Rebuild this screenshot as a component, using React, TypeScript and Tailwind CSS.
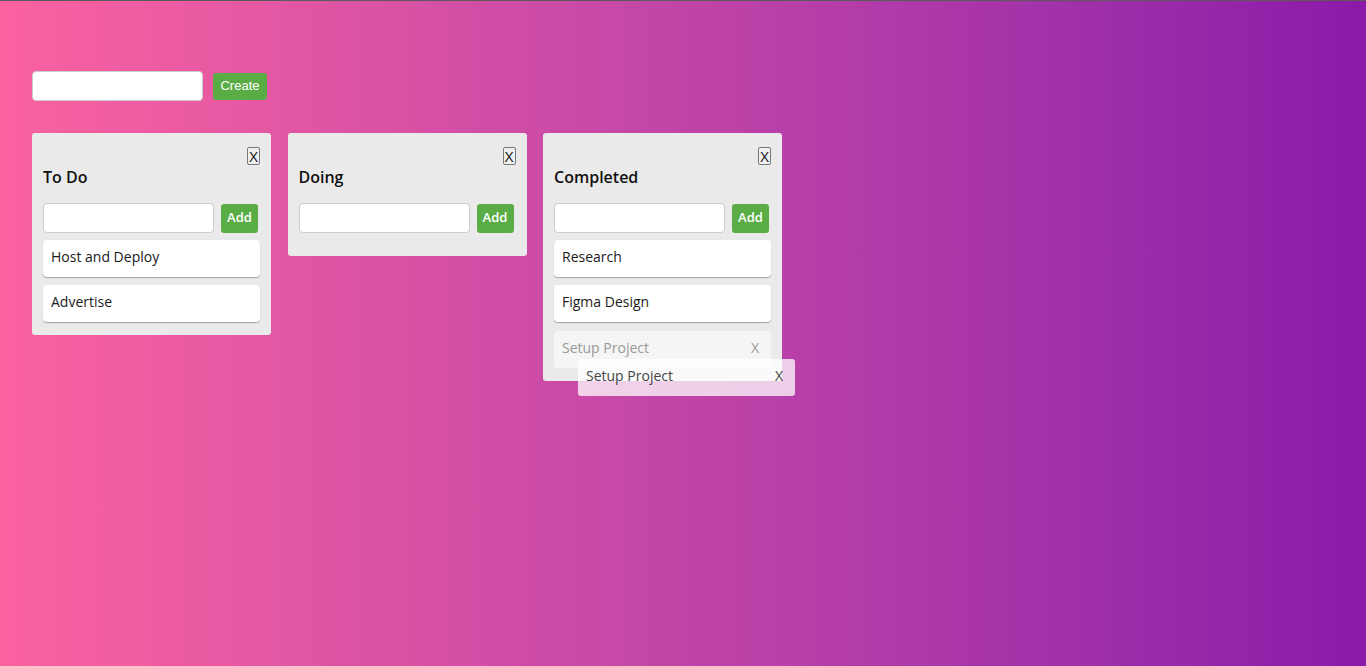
import React from "react";

type Column = {
  title: string;
  cards: string[];
  ghost?: string;
};

const columns: Column[] = [
  { title: "To Do", cards: ["Host and Deploy", "Advertise"] },
  { title: "Doing", cards: [] },
  { title: "Completed", cards: ["Research", "Figma Design"], ghost: "Setup Project" },
];

function Card({ text }: { text: string }) {
  return (
    <div className="flex h-[37px] items-center rounded-[4px] bg-white px-2 pb-[4px] text-[14px] text-[#1a1a1a] shadow-[0_1px_1px_rgba(0,0,0,0.3)]">
      {text}
    </div>
  );
}

function BoardColumn({ col }: { col: Column }) {
  return (
    <div className="relative w-[239px] rounded-[3px] bg-[#eaeaea] px-[11px] pt-[14px] pb-[13px]">
      <div className="flex h-[18px] justify-end">
        <button className="flex h-[18px] w-[13px] items-center justify-center rounded-[2px] border border-[#777] bg-[#f0f0f0] text-[15px] leading-none text-[#111]">
          X
        </button>
      </div>
      <h2 className="mt-[1px] h-[22px] text-[16px] leading-[22px] font-semibold text-[#111]">
        {col.title}
      </h2>
      <div className="mt-[15px] flex items-center gap-[7px]">
        <input className="h-[30px] w-[171px] rounded-[4px] border border-[#ccc] bg-white px-2 text-[14px] outline-none" />
        <button className="h-[29px] w-[37px] rounded-[3px] bg-[#5aad45] pb-[1px] text-[13px] font-semibold text-white">
          Add
        </button>
      </div>
      <div className="flex min-h-[10px] flex-col gap-2 pt-[7px]">
        {col.cards.map((c, i) => (
          <Card key={i} text={c} />
        ))}
        {col.ghost && (
          <div className="mt-[1px] flex h-[37px] items-center justify-between rounded-[4px] bg-[#f5f5f5] pr-[12px] pb-[4px] pl-2 text-[14px] text-[#999]">
            <span>{col.ghost}</span>
            <span>X</span>
          </div>
        )}
      </div>
      {col.ghost && (
        <div className="absolute top-[226px] left-[35px] z-10 flex h-[37px] w-[217px] items-center justify-between rounded-[3px] bg-white/75 pr-[12px] pb-[4px] pl-2 text-[14px] text-[#444]">
          <span>{col.ghost}</span>
          <span>X</span>
        </div>
      )}
    </div>
  );
}

export default function App() {
  return (
    <div
      className="min-h-[666px] w-full border-t border-[#5a5a5a] bg-gradient-to-r from-[#fb62a0] to-[#8b19a9] px-8 pt-[70px]"
      style={{ fontFamily: '"Open Sans", sans-serif' }}
    >
      <div className="flex items-center gap-[10px]">
        <input className="h-[30px] w-[171px] rounded-[4px] border border-[#ccc] bg-white px-2 text-[14px] outline-none" />
        <button
          className="h-[27px] w-[54px] rounded-[3px] bg-[#5aad45] text-[13px] text-white"
          style={{ fontFamily: '"Liberation Sans", Arial, sans-serif' }}
        >
          Create
        </button>
      </div>
      <div className="mt-[32px] flex items-start gap-[16.5px]">
        {columns.map((col) => (
          <BoardColumn key={col.title} col={col} />
        ))}
      </div>
    </div>
  );
}
